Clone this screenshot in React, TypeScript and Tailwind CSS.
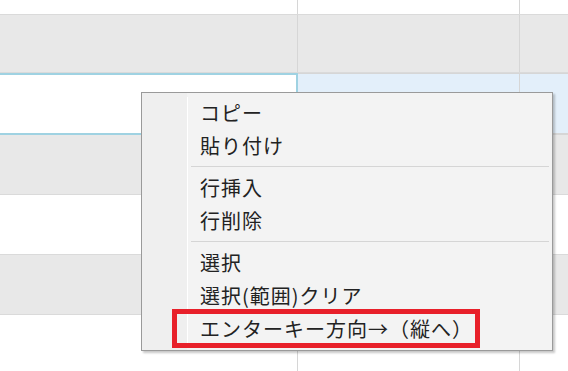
import type { ReactNode } from 'react';

type Row = { tone: 'white' | 'gray'; h: string; active?: boolean };

// 背景のグリッド行
const rows: Row[] = [
  { tone: 'white', h: 'h-[15px]' },
  { tone: 'gray', h: 'h-[58px]' },
  { tone: 'white', h: 'h-[62px]', active: true },
  { tone: 'gray', h: 'h-[60px]' },
  { tone: 'white', h: 'h-[60px]' },
  { tone: 'gray', h: 'h-[60px]' },
  { tone: 'white', h: 'h-[60px]' },
];

function GridRow({ row }: { row: Row }) {
  const bg = row.tone === 'gray' ? 'bg-[#e8e8e8]' : 'bg-white';
  if (row.active) {
    return (
      <div className={`flex ${row.h}`}>
        <div className="w-[298px] shrink-0 bg-white border-y-2 border-r-2 border-[#9fd2e2]" />
        <div className="w-[222px] shrink-0 bg-[#e3effa] border-t border-b-2 border-r border-t-[#d6d6d6] border-b-[#d6d6d6] border-r-[#d6d6d6]" />
        <div className="flex-1 bg-[#e3effa] border-t border-b-2 border-[#d6d6d6]" />
      </div>
    );
  }
  return (
    <div className={`flex ${row.h} border-b border-[#dadada]`}>
      <div className={`w-[298px] shrink-0 border-r border-[#d6d6d6] ${bg}`} />
      <div className={`w-[222px] shrink-0 border-r border-[#d6d6d6] ${bg}`} />
      <div className={`flex-1 ${bg}`} />
    </div>
  );
}

function MenuItem({ children, marked }: { children: ReactNode; marked?: boolean }) {
  return (
    <div className="relative h-[33px] flex items-center pl-[12px] text-[20px] tracking-[1px] text-[#222222] leading-none whitespace-nowrap">
      {children}
      {marked && (
        <div className="absolute -top-[3px] -bottom-[3px] -left-[16px] w-[308px] border-[5px] border-[#e8202a]" />
      )}
    </div>
  );
}

function Separator() {
  return <div className="h-px bg-[#d5d5d5] ml-[3px] mr-[3px] my-[4px]" />;
}

export default function App() {
  return (
    <div
      className="relative w-[568px] h-[371px] overflow-hidden bg-white"
      style={{ fontFamily: '"Noto Sans CJK JP", "Noto Sans", sans-serif' }}
    >
      {rows.map((row, i) => (
        <GridRow key={i} row={row} />
      ))}

      {/* コンテキストメニュー */}
      <div className="absolute left-[141px] top-[92px] w-[412px] h-[259px] flex bg-[#f3f3f3] border border-[#9a9a9a] shadow-[2px_2px_2px_rgba(0,0,0,0.22)]">
        <div className="w-[45px] shrink-0 bg-[#efefef]" />
        <div className="w-px shrink-0 bg-white my-[4px]" />
        <div className="flex-1 pt-[3px] pb-[4px]">
          <MenuItem>コピー</MenuItem>
          <MenuItem>貼り付け</MenuItem>
          <Separator />
          <MenuItem>行挿入</MenuItem>
          <MenuItem>行削除</MenuItem>
          <Separator />
          <MenuItem>選択</MenuItem>
          <MenuItem>選択(範囲)クリア</MenuItem>
          <MenuItem marked>エンターキー方向→（縦へ）</MenuItem>
        </div>
      </div>
    </div>
  );
}
